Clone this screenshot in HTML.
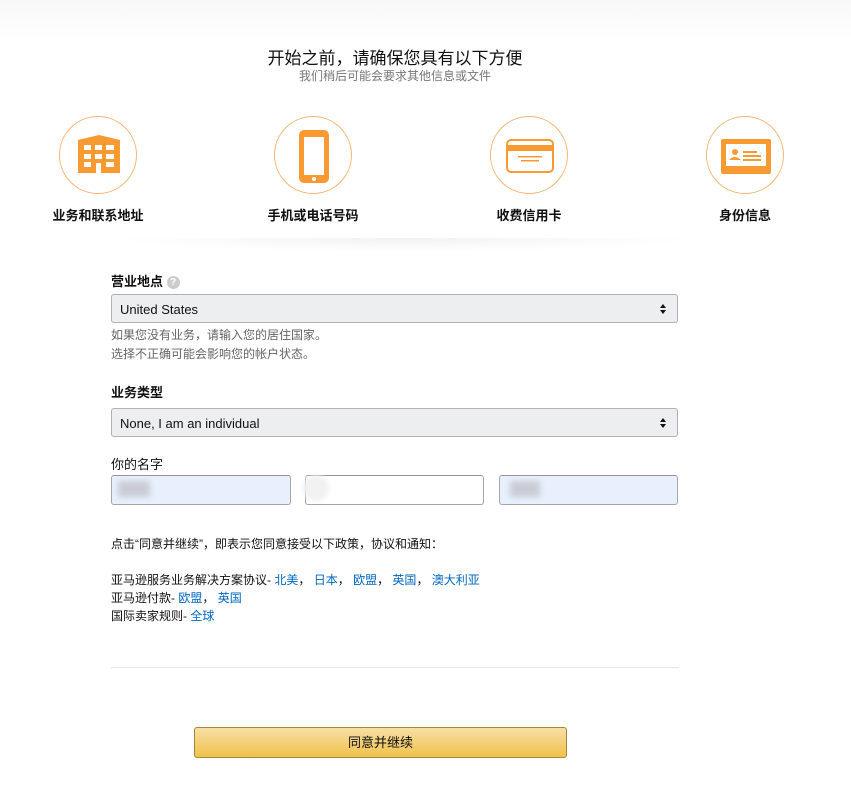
<!DOCTYPE html>
<html><head><meta charset="utf-8"><style>
*{margin:0;padding:0;box-sizing:border-box}
body{width:851px;height:790px;background:#fff;font-family:"Liberation Sans","Noto Sans CJK SC",sans-serif;color:#111;position:relative;overflow:hidden}
.top{position:absolute;left:0;top:0;width:851px;height:40px;background:linear-gradient(#f8f8f8,#fff)}
.a{position:absolute}
.t1{left:0;width:790px;text-align:center;top:44px;font-size:17px}
.t2{left:0;width:790px;text-align:center;top:67px;font-size:12px;color:#777}
.circ{width:78px;height:78px;border:1px solid #f7b574;border-radius:50%;top:116px}
.lab{top:205px;font-size:13px;font-weight:bold;width:160px;text-align:center}
.sep{left:110px;width:590px;top:238px;height:14px;background:radial-gradient(ellipse at top,rgba(0,0,0,.05),rgba(0,0,0,0) 70%)}
.fl{font-size:13px;font-weight:bold;left:111px}
.sel{left:111px;width:567px;height:29px;background:#eceef0;border:1px solid #adb1b8;border-radius:3px;font-size:13px;padding:7px 8px;color:#111}
.sel:after{content:"";position:absolute;right:11px;top:9px;width:0;height:0;border:3px solid transparent;border-bottom:4px solid #111;border-top:none}
.sel:before{content:"";position:absolute;right:11px;top:15px;width:0;height:0;border:3px solid transparent;border-top:4px solid #111;border-bottom:none}
.hint{left:111px;font-size:12px;color:#666}
.inp{top:475px;height:30px;border:1px solid #a6a6a6;border-top-color:#949494;border-radius:3px;background:#e8f0fe}
.blur{background:#c9ccd4;filter:blur(3px)}
.txt{left:111px;font-size:12px;color:#111}
.lnk{color:#0066c0}
.btn{left:194px;top:727px;width:373px;height:31px;border:1px solid #a88734;border-radius:3px;background:linear-gradient(#f7dfa5,#f0c14b);font-size:13px;text-align:center;line-height:29px}
</style></head><body>
<div class="top"></div>
<div class="a t1">开始之前，请确保您具有以下方便</div>
<div class="a t2">我们稍后可能会要求其他信息或文件</div>

<div class="a circ" style="left:59px"><svg width="78" height="78" viewBox="0 0 78 78"><path d="M18 23 L39 18 L60 23 V56 H18Z" fill="#f79a32"/><g fill="#fff"><rect x="24" y="28" width="7" height="5"/><rect x="35" y="28" width="7" height="5"/><rect x="46" y="28" width="8" height="5"/><rect x="24" y="37" width="7" height="5"/><rect x="35" y="37" width="7" height="5"/><rect x="46" y="37" width="8" height="5"/><rect x="24" y="45" width="7" height="5"/><rect x="46" y="45" width="8" height="5"/><rect x="36" y="46" width="5" height="10"/></g></svg></div>
<div class="a circ" style="left:274px"><svg width="78" height="78" viewBox="0 0 78 78"><rect x="24" y="13" width="30" height="53" rx="5" fill="#f79a32"/><rect x="29" y="20" width="20" height="38" fill="#fff"/><circle cx="39" cy="62" r="2" fill="#fff"/></svg></div>
<div class="a circ" style="left:490px"><svg width="78" height="78" viewBox="0 0 78 78"><rect x="16" y="23" width="46" height="32" rx="4" fill="none" stroke="#f79a32" stroke-width="2"/><rect x="16" y="28" width="46" height="6" fill="#f79a32"/><rect x="27" y="39" width="24" height="1.5" fill="#f79a32"/><rect x="30" y="43" width="18" height="1.5" fill="#f79a32"/></svg></div>
<div class="a circ" style="left:706px"><svg width="78" height="78" viewBox="0 0 78 78"><rect x="14" y="22" width="50" height="35" rx="2" fill="#f79a32"/><rect x="19" y="27" width="40" height="22" fill="#fff"/><circle cx="28" cy="35" r="3" fill="#f79a32"/><path d="M22 43 Q28 37 34 43Z" fill="#f79a32"/><rect x="36" y="34" width="14" height="2" fill="#f79a32"/><rect x="36" y="38" width="18" height="2" fill="#f79a32"/><rect x="36" y="42" width="18" height="2" fill="#f79a32"/></svg></div>
<div class="a lab" style="left:18px">业务和联系地址</div>
<div class="a lab" style="left:233px">手机或电话号码</div>
<div class="a lab" style="left:449px">收费信用卡</div>
<div class="a lab" style="left:665px">身份信息</div>
<div class="a sep"></div>

<div class="a fl" style="top:271px">营业地点 <span style="display:inline-block;width:13px;height:13px;border-radius:50%;background:#ccc;color:#fff;font-size:10px;text-align:center;line-height:13px;vertical-align:1px">?</span></div>
<div class="a sel" style="top:294px">United States</div>
<div class="a hint" style="top:326px">如果您没有业务，请输入您的居住国家。</div>
<div class="a hint" style="top:345px">选择不正确可能会影响您的帐户状态。</div>
<div class="a fl" style="top:382px">业务类型</div>
<div class="a sel" style="top:408px">None, I am an individual</div>
<div class="a txt" style="top:454px;font-size:13px">你的名字</div>
<div class="a inp" style="left:111px;width:180px"></div>
<div class="a inp" style="left:305px;width:179px;background:#fff"></div>
<div class="a inp" style="left:499px;width:179px"></div>
<div class="a blur" style="left:118px;top:481px;width:32px;height:16px"></div>
<div class="a blur" style="left:510px;top:481px;width:30px;height:16px"></div>
<div class="a" style="left:303px;top:475px;width:26px;height:26px;border-radius:50%;background:#f2f2f2;filter:blur(2px)"></div>

<div class="a txt" style="top:535px">点击“同意并继续”，即表示您同意接受以下政策，协议和通知：</div>
<div class="a txt" style="top:571px">亚马逊服务业务解决方案协议- <span class="lnk">北美</span>， <span class="lnk">日本</span>， <span class="lnk">欧盟</span>， <span class="lnk">英国</span>， <span class="lnk">澳大利亚</span></div>
<div class="a txt" style="top:589px">亚马逊付款- <span class="lnk">欧盟</span>， <span class="lnk">英国</span></div>
<div class="a txt" style="top:607px">国际卖家规则- <span class="lnk">全球</span></div>
<div class="a" style="left:111px;top:667px;width:568px;height:1px;background:#e7e7e7"></div>
<div class="a btn">同意并继续</div>
</body></html>
